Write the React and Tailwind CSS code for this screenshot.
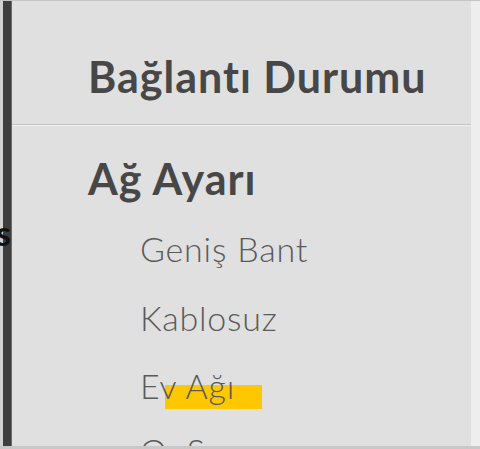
export default function App() {
  const font = { fontFamily: "Lato, 'Open Sans', sans-serif" };
  return (
    <div className="w-[480px] h-[449px] flex flex-col bg-[#c8c8c8] overflow-hidden relative" style={font}>
      <div className="h-px shrink-0 bg-[#c6c6c6]" />
      <div className="flex flex-1 min-h-0">
        <div className="w-[3px] shrink-0 bg-[#d2d2d2]" />
        <div className="w-[8px] shrink-0 bg-[#3e3e3e]" />
        <div className="w-px shrink-0 bg-[#6a6a6a]" />
        <div className="flex-1 min-w-0 bg-[#e0e0e0] flex flex-col overflow-hidden">
          <div className="h-[123px] shrink-0 pl-[76px] pt-[54px]">
            <div className="text-[43px] leading-[43px] font-bold tracking-[1px] text-[#474747] whitespace-nowrap">Bağlantı Durumu</div>
          </div>
          <div className="h-px shrink-0 bg-[#c2c2c2]" />
          <div className="h-px shrink-0 bg-[#f2f2f2]" />
          <div className="shrink-0 pl-[76px] pt-[31px]">
            <div className="text-[43px] leading-[43px] font-bold tracking-[1px] text-[#474747] whitespace-nowrap">Ağ Ayarı</div>
          </div>
          <div className="shrink-0 pl-[128px] pt-[32px] flex flex-col text-[34px] leading-[34px] font-light tracking-[0.8px] text-[#5a5a5a] whitespace-nowrap">
            <div>Geniş Bant</div>
            <div className="mt-[35px]">Kablosuz</div>
            <div className="relative mt-[34px]">
              <span className="absolute left-[25px] top-[16px] w-[97px] h-[24px] bg-[#ffc700]" />
              <span className="relative">Ev Ağı</span>
            </div>
            <div className="mt-[31px]">QoS</div>
          </div>
        </div>
        <div className="w-[9px] shrink-0 bg-[#eeeeee]" />
      </div>
      <div className="h-[3px] shrink-0 bg-[#c8c8c8]" />
      <span className="absolute left-[-4px] top-[216px] text-[34px] leading-[34px] font-bold text-[#111111]">s</span>
    </div>
  );
}
